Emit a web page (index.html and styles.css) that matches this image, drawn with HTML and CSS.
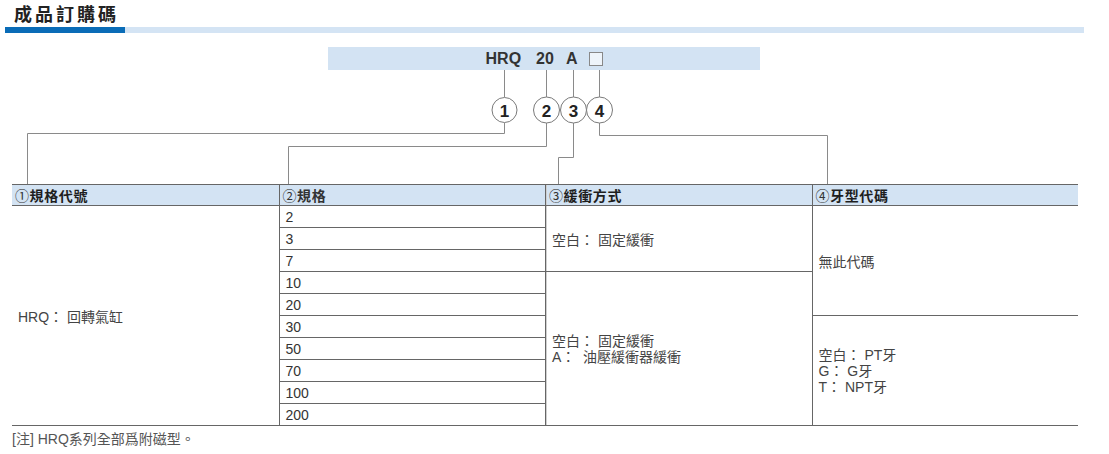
FILE: index.html
```html
<!DOCTYPE html>
<html lang="zh-Hant">
<head>
<meta charset="utf-8">
<title>成品訂購碼</title>
<link rel="stylesheet" href="styles.css">
</head>
<body>
<div class="page">
  <h1 class="title">成品訂購碼</h1>
  <div class="title-bar"><span class="title-bar-accent"></span></div>

  <div class="diagram">
    <div class="code-banner">
      <span class="code-seg code-hrq">HRQ</span>
      <span class="code-seg code-size">20</span>
      <span class="code-seg code-a">A</span>
      <span class="code-box"></span>
    </div>
    <svg class="connectors" width="1109" height="151" viewBox="0 0 1109 151">
      <g class="conn-lines" fill="none" stroke="#8a8a8a" stroke-width="1">
        <path d="M504.5 37 V64"/>
        <path d="M546.5 37 V64"/>
        <path d="M573.5 37 V64"/>
        <path d="M599.5 37 V64"/>
        <path d="M504.5 90 V100.5 H27.5 V151"/>
        <path d="M546.5 90 V113.5 H288.5 V151"/>
        <path d="M573.5 90 V124.5 H558.5 V151"/>
        <path d="M599.5 90 V102.5 H827.5 V151"/>
      </g>
      <g class="conn-circles" fill="#fff" stroke="#7a7a7a" stroke-width="1">
        <circle cx="504.5" cy="77" r="12.5"/>
        <circle cx="546.5" cy="77" r="13"/>
        <circle cx="573.5" cy="77" r="13"/>
        <circle cx="599.5" cy="77" r="13"/>
      </g>
      <g class="conn-nums">
        <text x="504.5" y="83.5">1</text>
        <text x="546.5" y="83.5">2</text>
        <text x="573.5" y="83.5">3</text>
        <text x="599.5" y="83.5">4</text>
      </g>
    </svg>
  </div>

  <div class="spec-grid">
    <div class="cell head c1"><span class="circ">①</span>規格代號</div>
    <div class="cell head c2"><span class="circ">②</span>規格</div>
    <div class="cell head c3"><span class="circ">③</span>緩衝方式</div>
    <div class="cell head c4"><span class="circ">④</span>牙型代碼</div>

    <div class="cell c1 span-all">HRQ：&nbsp;回轉氣缸</div>

    <div class="cell c2 r2">2</div>
    <div class="cell c2 r3">3</div>
    <div class="cell c2 r4">7</div>
    <div class="cell c2 r5">10</div>
    <div class="cell c2 r6">20</div>
    <div class="cell c2 r7">30</div>
    <div class="cell c2 r8">50</div>
    <div class="cell c2 r9">70</div>
    <div class="cell c2 r10">100</div>
    <div class="cell c2 r11">200</div>

    <div class="cell c3 cush-a">空白：&nbsp;固定緩衝</div>
    <div class="cell c3 cush-b multi">
      <span>空白：&nbsp;固定緩衝</span>
      <span>A：&nbsp;&nbsp;油壓緩衝器緩衝</span>
    </div>

    <div class="cell c4 thread-a">無此代碼</div>
    <div class="cell c4 thread-b multi">
      <span>空白：&nbsp;PT牙</span>
      <span>G：&nbsp;G牙</span>
      <span>T：&nbsp;NPT牙</span>
    </div>
  </div>

  <p class="note">[注] HRQ系列全部爲附磁型。</p>
</div>
</body>
</html>
```

FILE: styles.css
```css
html, body {
  margin: 0;
  padding: 0;
  background: #ffffff;
}

body {
  font-family: "Liberation Sans", "Noto Sans CJK TC", sans-serif;
  color: #444;
  width: 1109px;
  height: 454px;
  overflow: hidden;
}

.page {
  width: 1109px;
}

.title {
  margin: 0 0 3px 0;
  padding: 2px 0 0 14px;
  height: 22px;
  line-height: 22px;
  font-size: 18px;
  font-weight: 700;
  letter-spacing: 3px;
  color: #222;
  font-family: "Noto Sans CJK TC", sans-serif;
}

.title-bar {
  margin-left: 5px;
  width: 1079px;
  height: 6px;
  background: #d4e4f4;
  display: flex;
}

.title-bar-accent {
  width: 120px;
  height: 6px;
  background: #0a6cb7;
}

.diagram {
  position: relative;
  height: 151px;
  padding-top: 14px;
  box-sizing: border-box;
}

.code-banner {
  margin-left: 328px;
  width: 432px;
  height: 23px;
  background: #d3e3f3;
  display: flex;
  align-items: center;
  justify-content: center;
  font-family: "Liberation Sans", sans-serif;
  font-weight: 700;
  font-size: 16px;
  color: #333;
  padding-left: 1px;
  box-sizing: border-box;
}

.code-seg {
  line-height: 23px;
}

.code-size {
  margin-left: 15px;
}

.code-a {
  margin-left: 12px;
}

.code-box {
  margin-left: 12px;
  width: 12px;
  height: 12px;
  border: 1px solid #888;
  background: #eef4fa;
  margin-top: 1px;
}

.connectors {
  position: absolute;
  left: 0;
  top: 0;
}

.conn-nums text {
  font-family: "Liberation Sans", sans-serif;
  font-weight: 700;
  font-size: 17px;
  fill: #222;
  text-anchor: middle;
}

.spec-grid {
  margin-left: 12px;
  width: 1066px;
  display: grid;
  grid-template-columns: repeat(4, 1fr);
  grid-template-rows: 21px repeat(10, 22px);
  border-top: 1px solid #666;
}

.cell {
  box-sizing: border-box;
  display: flex;
  align-items: center;
  padding-left: 6px;
  font-size: 14px;
  color: #444;
  border-bottom: 1px solid #666;
  white-space: nowrap;
}

.cell.c2,
.cell.c4 {
  border-left: 1px solid #666;
}

.cell.c3 {
  border-left: 1px solid #666;
  box-shadow: inset 1px 0 0 #cfcfcf;
}

.head {
  background: #d3e3f3;
  font-weight: 700;
  color: #1e1e1e;
  padding-left: 3px;
  font-size: 14px;
  letter-spacing: 0.6px;
  grid-row: 1;
}

.circ {
  font-weight: 400;
  color: #333;
}

.c1 { grid-column: 1; }
.c2 { grid-column: 2; }
.c3 { grid-column: 3; }
.c4 { grid-column: 4; }

.span-all { grid-row: 2 / 12; }

.r2 { grid-row: 2; }
.r3 { grid-row: 3; }
.r4 { grid-row: 4; }
.r5 { grid-row: 5; }
.r6 { grid-row: 6; }
.r7 { grid-row: 7; }
.r8 { grid-row: 8; }
.r9 { grid-row: 9; }
.r10 { grid-row: 10; }
.r11 { grid-row: 11; }

.cush-a { grid-row: 2 / 5; }
.cush-b { grid-row: 5 / 12; }
.thread-a { grid-row: 2 / 7; }
.thread-b { grid-row: 7 / 12; }

.multi {
  flex-direction: column;
  justify-content: center;
  align-items: flex-start;
  line-height: 16px;
}

.c2 {
  color: #333;
}

.note {
  margin: 4px 0 0 12px;
  font-size: 14px;
  line-height: 18px;
  color: #555;
}
```
